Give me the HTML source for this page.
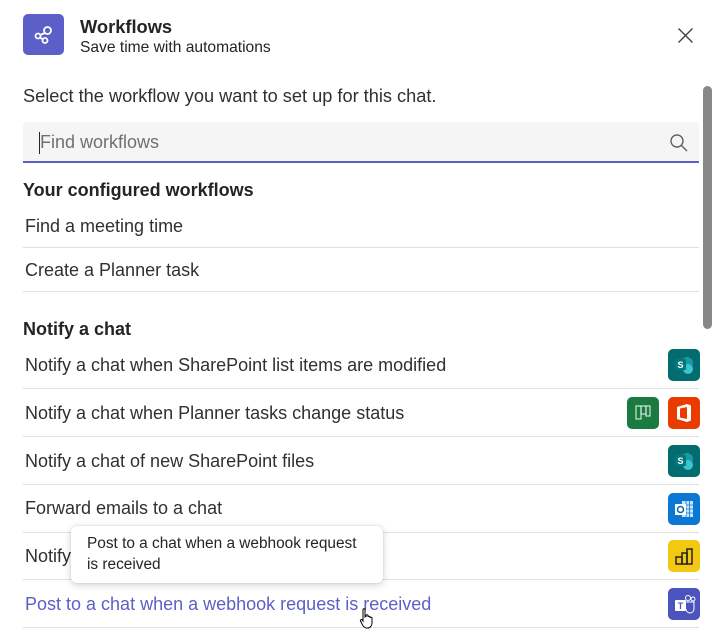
<!DOCTYPE html>
<html><head><meta charset="utf-8"><style>
*{margin:0;padding:0;box-sizing:border-box}
body{width:725px;height:637px;background:#fff;font-family:"Liberation Sans",sans-serif;color:#242424;position:relative;overflow:hidden}
.a{position:absolute;white-space:nowrap}
.t{font-size:18px;line-height:20px;left:25px;color:#303030}
.h{font-size:18px;font-weight:bold;left:23px;line-height:20px}
.sep{position:absolute;left:23px;width:676px;height:1px;background:#e0e0e0}
.ic{position:absolute;width:32px;height:32px;border-radius:5px;left:668px}
</style></head><body>
<div class="a" style="left:23px;top:14px;width:41px;height:41px;border-radius:5px;background:#5b5fc7">
<svg width="41" height="41" viewBox="0 0 41 41"><g fill="none" stroke="#fff" stroke-width="1.8"><circle cx="24.5" cy="16.5" r="3.5"/><circle cx="15" cy="22" r="2.5"/><circle cx="22" cy="26.5" r="2.5"/><path d="M22 19 L17 21 M17 23.5 L20 25.5"/></g></svg></div>
<div class="a" style="left:80px;top:16px;font-size:18.3px;font-weight:bold">Workflows</div>
<div class="a" style="left:80px;top:39px;font-size:15.6px">Save time with automations</div>
<svg class="a" style="left:677px;top:27px" width="17" height="17"><path d="M1.5 1.5L15.5 15.5M15.5 1.5L1.5 15.5" stroke="#424242" stroke-width="1.4"/></svg>
<div class="a" style="left:23px;top:86px;font-size:18.2px;color:#303030">Select the workflow you want to set up for this chat.</div>
<div class="a" style="left:23px;top:122px;width:676px;height:41px;background:#f5f5f5;border-radius:4px 4px 0 0;border-bottom:2px solid #5b5fc7"></div>
<div class="a" style="left:39px;top:132px;width:1px;height:22px;background:#242424"></div>
<div class="a" style="left:40px;top:132px;font-size:18px;color:#707070">Find workflows</div>
<svg class="a" style="left:669px;top:133px" width="20" height="20"><circle cx="8" cy="8" r="6" fill="none" stroke="#616161" stroke-width="1.4"/><path d="M12.5 12.5L18 18" stroke="#616161" stroke-width="1.4"/></svg>
<div class="a" style="left:703px;top:86px;width:9px;height:243px;border-radius:5px;background:#888"></div>
<div class="a h" style="top:180px">Your configured workflows</div>
<div class="a t" style="top:216px">Find a meeting time</div>
<div class="sep" style="top:247px"></div>
<div class="a t" style="top:260px">Create a Planner task</div>
<div class="sep" style="top:291px"></div>
<div class="a h" style="top:319px">Notify a chat</div>
<div class="a t" style="top:355px">Notify a chat when SharePoint list items are modified</div>
<div class="sep" style="top:388px"></div>
<div class="a t" style="top:403px">Notify a chat when Planner tasks change status</div>
<div class="sep" style="top:436px"></div>
<div class="a t" style="top:451px">Notify a chat of new SharePoint files</div>
<div class="sep" style="top:484px"></div>
<div class="a t" style="top:498px">Forward emails to a chat</div>
<div class="sep" style="top:532px"></div>
<div class="a t" style="top:546px">Notify a chat</div>
<div class="sep" style="top:579px"></div>
<div class="a t" style="top:594px;color:#5b5fc7">Post to a chat when a webhook request is received</div>
<div class="sep" style="top:627px"></div>
<div class="ic" style="top:349px;background:#036c70"><svg width="32" height="32"><circle cx="19" cy="14" r="6" fill="#1a9ba1"/><circle cx="20" cy="20" r="5" fill="#37c6d0"/><rect x="7" y="10" width="11" height="11" rx="1" fill="#03787c"/><text x="12.5" y="19" font-size="9" fill="#fff" text-anchor="middle" font-family="Liberation Sans" font-weight="bold">S</text></svg></div>
<div class="ic" style="top:397px;left:627px;background:#1a7a3f"><svg width="32" height="32"><g fill="none" stroke="#cfe8d8" stroke-width="1.2"><rect x="9" y="9" width="5" height="13"/><rect x="14" y="9" width="5" height="8"/><rect x="19" y="9" width="4" height="10"/></g></svg></div>
<div class="ic" style="top:397px;background:#eb3c00"><svg width="32" height="32"><path d="M9 10L19 7L23 8.5V23.5L19 25L9 22Z" fill="#fff"/><path d="M12 11.5L19 10V22L12 20.5Z" fill="#eb3c00"/></svg></div>
<div class="ic" style="top:445px;background:#036c70"><svg width="32" height="32"><circle cx="19" cy="14" r="6" fill="#1a9ba1"/><circle cx="20" cy="20" r="5" fill="#37c6d0"/><rect x="7" y="10" width="11" height="11" rx="1" fill="#03787c"/><text x="12.5" y="19" font-size="9" fill="#fff" text-anchor="middle" font-family="Liberation Sans" font-weight="bold">S</text></svg></div>
<div class="ic" style="top:493px;background:#0a78d4"><svg width="32" height="32"><rect x="14" y="8" width="11" height="16" fill="#cde4f7"/><path d="M14 12H25M14 16H25M14 20H25M18 8V24M21.5 8V24" stroke="#0a78d4" stroke-width=".8"/><rect x="7" y="11" width="11" height="11" fill="#fff"/><circle cx="12.5" cy="16.5" r="3" fill="none" stroke="#0a64b0" stroke-width="1.5"/></svg></div>
<div class="ic" style="top:540px;background:#f2c811"><svg width="32" height="32"><g fill="none" stroke="#222" stroke-width="1.5"><rect x="8" y="17" width="6" height="7"/><rect x="14" y="13" width="5" height="11"/><rect x="19" y="9" width="5" height="15"/></g></svg></div>
<div class="ic" style="top:588px;background:#4b53bc"><svg width="32" height="32"><circle cx="20" cy="10" r="2.5" fill="none" stroke="#fff" stroke-width="1"/><circle cx="25" cy="11" r="2" fill="none" stroke="#fff" stroke-width="1"/><path d="M17 14H26V21A4 4 0 0 1 18 21" fill="none" stroke="#fff" stroke-width="1"/><rect x="7" y="12" width="11" height="11" rx="1" fill="#fff"/><text x="12.5" y="21" font-size="9" fill="#4b53bc" text-anchor="middle" font-family="Liberation Sans" font-weight="bold">T</text></svg></div>
<div class="a" style="left:71px;top:526px;width:312px;height:57px;background:#fff;border-radius:6px;box-shadow:0 2px 8px rgba(0,0,0,.18),0 0 2px rgba(0,0,0,.12)"></div>
<div class="a" style="left:87px;top:533px;font-size:15.4px;line-height:21px;white-space:normal;width:295px">Post to a chat when a webhook request<br>is received</div>
<svg class="a" style="left:359px;top:607px" width="16" height="24"><path d="M4 2.5C4 1.5 6 1.5 6 2.5V10L7 9.5V8.5C7 7.5 9 7.5 9 8.5V10C9 9 11 9 11 10V11C11 10 13 10 13 11V16C13 19 11 21 8.5 21H7.5C5.5 21 4.5 19.5 3.5 18L1.5 14C1 13 2.5 12 3.3 13L4 14Z" fill="#fff" stroke="#000" stroke-width="1"/></svg>
</body></html>
